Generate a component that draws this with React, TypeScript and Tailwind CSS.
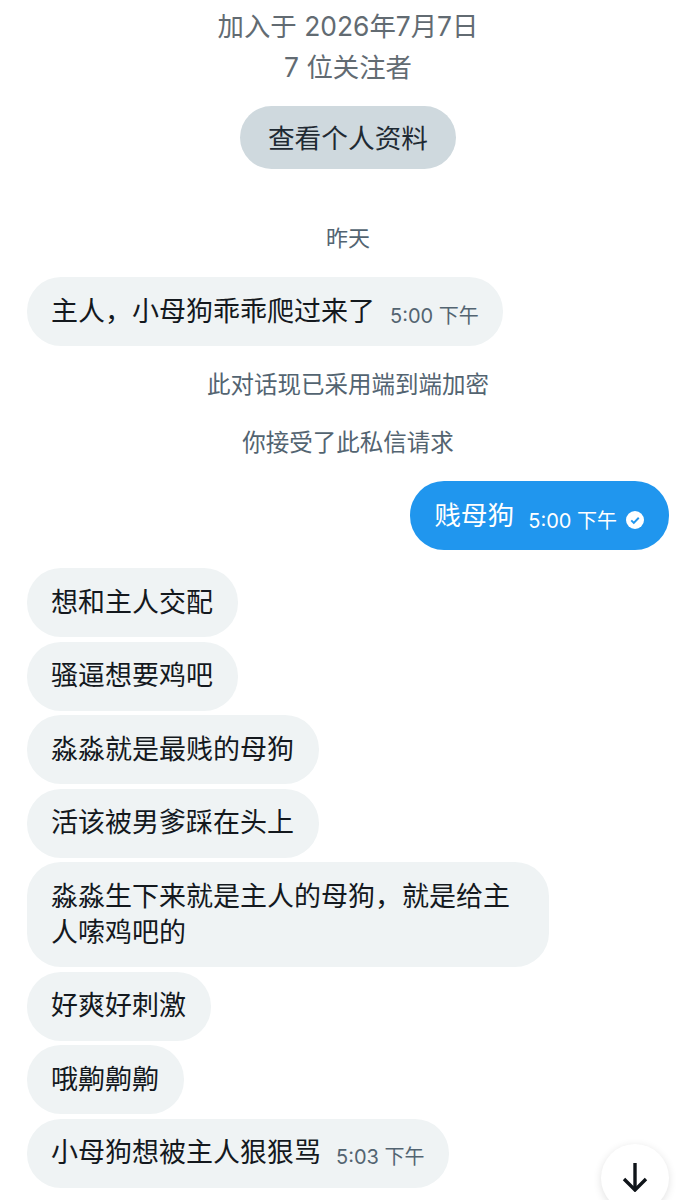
const incoming = [
  { text: '想和主人交配' },
  { text: '骚逼想要鸡吧' },
  { text: '淼淼就是最贱的母狗' },
  { text: '活该被男爹踩在头上' },
  { text: '淼淼生下来就是主人的母狗，就是给主人嗦鸡吧的', wide: true },
  { text: '好爽好刺激' },
  { text: '哦齁齁齁' },
  { text: '小母狗想被主人狠狠骂', time: '5:03 下午' },
]

function Bubble({ text, time, wide }: { text: string; time?: string; wide?: boolean }) {
  return (
    <div
      className={`rounded-[34px] bg-[#eff3f4] py-[16.5px] pr-[24.5px] pl-[24px] text-[27px] leading-[36px] text-[#14191e] ${
        wide ? 'w-[522px]' : 'w-fit'
      }`}
    >
      {text}
      {time && <span className="ml-[15px] align-[-2px] text-[20px] leading-none text-[#536471]">{time}</span>}
    </div>
  )
}

function Notice({ children, className }: { children: React.ReactNode; className: string }) {
  return <p className={`text-center text-[#536471] ${className}`}>{children}</p>
}

export default function App() {
  return (
    <div className="relative h-[1200px] w-[696px] overflow-hidden bg-white font-['Inter','Noto_Sans_CJK_SC',sans-serif]">
      <div className="flex flex-col items-center pt-[6px] text-[26.4px] leading-[41px] text-[#626b72]">
        <p>加入于 2026年7月7日</p>
        <p>7 位关注者</p>
        <button className="mt-[18px] h-[63px] w-[216px] rounded-full bg-[#cfd9de] pt-[1px] text-[26.7px] text-[#1f2a33]">
          查看个人资料
        </button>
      </div>

      <Notice className="mt-[53px] text-[22px] leading-[32px]">昨天</Notice>

      <div className="mt-[23px] px-[27px]">
        <Bubble text="主人，小母狗乖乖爬过来了" time="5:00 下午" />
      </div>

      <Notice className="mt-[23px] text-[23.5px] leading-[32px]">此对话现已采用端到端加密</Notice>
      <Notice className="mt-[26px] text-[23.5px] leading-[32px]">你接受了此私信请求</Notice>

      <div className="mt-[22px] flex justify-end pr-[27px]">
        <div className="flex h-[69px] items-center rounded-[34px] bg-[#2096ee] pr-[25px] pl-[24px] text-white">
          <span className="text-[26.7px]">贱母狗</span>
          <span className="mt-[10px] ml-[14px] text-[20px]">5:00 下午</span>
          <svg viewBox="0 0 24 24" className="mt-[8px] ml-[9px] h-[18px] w-[18px]">
            <circle cx="12" cy="12" r="12" fill="#fff" />
            <path d="M7 12.5l3.4 3.4L17 9" fill="none" stroke="#2096ee" strokeWidth="2.6" />
          </svg>
        </div>
      </div>

      <div className="mt-[18px] flex flex-col gap-[4.5px] px-[27px]">
        {incoming.map((m) => (
          <Bubble key={m.text} text={m.text} time={m.time} wide={m.wide} />
        ))}
      </div>

      {/* scroll to bottom */}
      <div className="absolute top-[1144px] left-[601px] flex h-[68px] w-[68px] items-center justify-center rounded-full bg-white pb-[2px] shadow-[0_2px_8px_rgba(0,0,0,0.12)]">
        <svg viewBox="0 0 26 30" className="h-[30px] w-[26px]" fill="none" stroke="#0f1419" strokeWidth="3.4">
          <path d="M13 1v26" />
          <path d="M2 17l11 11 11-11" />
        </svg>
      </div>
    </div>
  )
}
